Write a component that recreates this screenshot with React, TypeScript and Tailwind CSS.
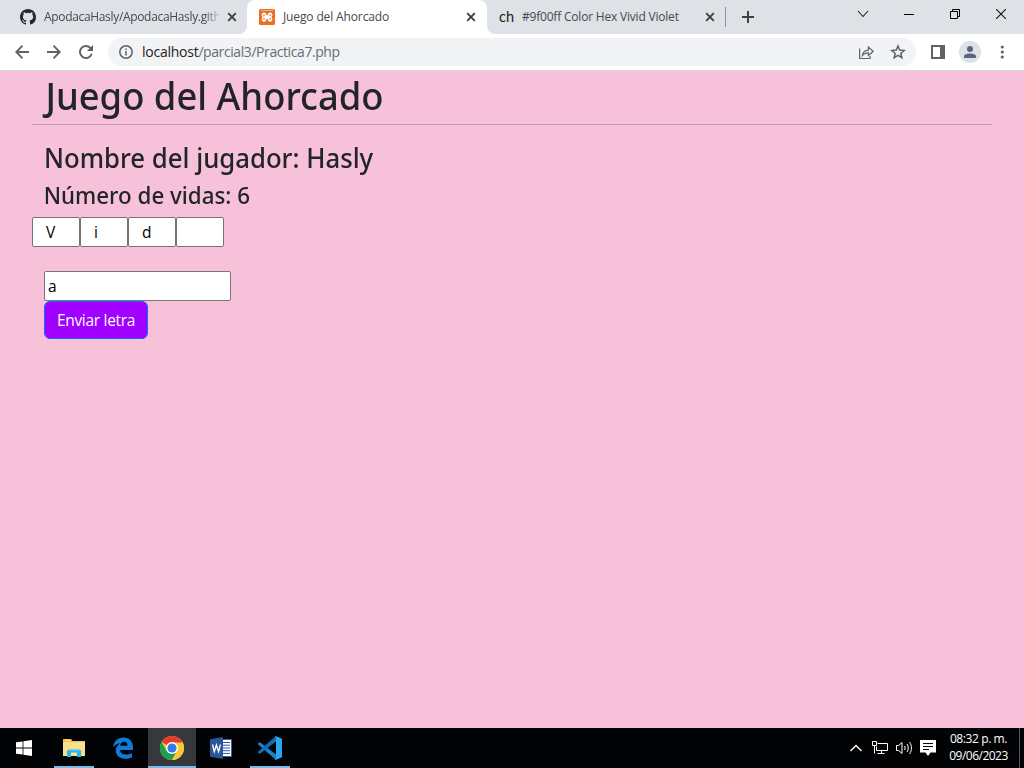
import React from 'react';

function CloseX() {
  return (
    <svg className="block h-[10px] w-[10px] shrink-0" viewBox="0 0 10 10" stroke="#3c4043" strokeWidth="1.9">
      <path d="M1.2 1.2l7.6 7.6M8.800 1.200l-7.600 7.600" />
    </svg>
  );
}

function TabStrip() {
  return (
    <div className="flex h-[34px] bg-white text-[12px] leading-[34px] text-[#45494d]">
      <div className="flex w-[247px] items-center rounded-br-[8px] bg-[#dee1e6] pl-[20px]">
        <svg className="block h-4 w-4 shrink-0" viewBox="0 0 16 16" fill="#24292f">
          <path d="M8 0C3.58 0 0 3.58 0 8c0 3.54 2.29 6.53 5.47 7.59.4.07.55-.17.55-.38 0-.19-.01-.82-.01-1.49-2.01.37-2.53-.49-2.69-.94-.09-.23-.48-.94-.82-1.13-.28-.15-.68-.52-.01-.53.63-.01 1.08.58 1.23.82.72 1.21 1.87.87 2.33.66.07-.52.28-.87.51-1.07-1.78-.2-3.64-.89-3.64-3.95 0-.87.31-1.59.82-2.15-.08-.2-.36-1.02.08-2.12 0 0 .67-.21 2.2.82a7.6 7.6 0 0 1 4 0c1.53-1.04 2.2-.82 2.2-.82.44 1.1.16 1.92.08 2.12.51.56.82 1.27.82 2.15 0 3.07-1.87 3.75-3.65 3.95.29.25.54.73.54 1.48 0 1.07-.01 1.93-.01 2.2 0 .21.15.46.55.38A8.01 8.01 0 0 0 16 8c0-4.42-3.58-8-8-8z" />
        </svg>
        <span className="ml-2 w-[175px] shrink-0 overflow-hidden whitespace-nowrap tracking-[-0.33px] [mask-image:linear-gradient(to_right,black_160px,transparent_178px)]">
          ApodacaHasly/ApodacaHasly.gith
        </span>
        <span className="ml-[8px]"><CloseX /></span>
      </div>
      <div className="w-[240px] bg-[#dee1e6]">
        <div className="flex h-full items-center rounded-t-[8px] bg-white pl-[12px]">
          <svg className="block h-4 w-4 shrink-0" viewBox="0 0 16 16">
            <rect width="16" height="16" rx="1.5" fill="#e8701f" />
            <path d="M2 1.500h12" stroke="#f5b288" strokeWidth="1" />
            <path
              d="M3.200 6.300V5.400c0-.9.500-1.400 1.400-1.400h.8c.9 0 1.500.6 1.500 1.500v1.300h2.200V5.500c0-.9.6-1.500 1.500-1.500h.8c.9 0 1.400.5 1.400 1.400v.9c0 .9-.5 1.700-1.300 1.700.8 0 1.300.8 1.300 1.700v1.100c0 .9-.5 1.400-1.400 1.400h-.8c-.9 0-1.500-.6-1.500-1.500V9.300H6.900v1.400c0 .9-.6 1.500-1.500 1.500h-.8c-.9 0-1.400-.5-1.400-1.400V9.700c0-.9.5-1.700 1.300-1.700-.8 0-1.300-.8-1.300-1.700z"
              fill="#fff" stroke="#fff" strokeWidth="1"
            />
            <path d="M5 5.500v1.700M5 9v1.700M11 5.500v1.700M11 9v1.700M8 3.500v2.300M8 10.300v2.300" stroke="#e8701f" strokeWidth="1.200" />
            <path d="M4.800 8h6.400" stroke="#fff" strokeWidth="1.600" />
          </svg>
          <span className="ml-2 w-[175px] whitespace-nowrap tracking-[-0.13px]">Juego del Ahorcado</span>
          <span className="ml-[8px]"><CloseX /></span>
        </div>
      </div>
      <div className="flex grow items-center rounded-bl-[8px] bg-[#dee1e6] pl-[12px]">
        <span className="w-[23px] font-['Lato',sans-serif] text-[14.5px] leading-[32px] tracking-[0.2px] text-[#202124]">ch</span>
        <span className="w-[175px] whitespace-nowrap tracking-[-0.2px]">#9f00ff Color Hex Vivid Violet</span>
        <span className="ml-[8px]"><CloseX /></span>
        <span className="ml-[10px] h-[20px] w-px bg-[#909398]" />
        <svg className="ml-[16px] block h-3 w-3" viewBox="0 0 12 12" stroke="#3c4043" strokeWidth="2">
          <path d="M6 0v12M0 6h12" />
        </svg>
      </div>
      <div className="flex w-[184px] items-start bg-[#dee1e6] text-black">
        <svg className="ml-[17px] mt-[10px] block h-[8px] w-[12px]" viewBox="0 0 12 8" fill="none" stroke="#222" strokeWidth="1.1">
          <path d="M1 1l5 5.500 5-5.500" />
        </svg>
        <span className="ml-[35px] mt-[14px] h-px w-[10px] bg-black" />
        <svg className="ml-[36px] mt-[9px] block h-[10px] w-[10px]" viewBox="0 0 10 10" fill="none" stroke="#000">
          <path d="M.5 2.500h7v7h-7zM2.500 2.500v-2h7v7h-2" />
        </svg>
        <svg className="ml-[36px] mt-[9px] block h-[10px] w-[10px]" viewBox="0 0 10 10" stroke="#111" strokeWidth="1.100">
          <path d="M0 0l10 10M10 0L0 10" />
        </svg>
      </div>
    </div>
  );
}

function Toolbar() {
  return (
    <div className="flex h-[37px] items-center border-b border-[#d5d8dc] bg-white pl-[15px]">
      <svg className="block h-[14px] w-[14px]" viewBox="0 0 14 14" fill="none" stroke="#5f6368" strokeWidth="1.900">
        <path d="M14 7H1.500M7.500.7L1.300 7l6.200 6.300" />
      </svg>
      <svg className="ml-[18px] block h-[14px] w-[14px]" viewBox="0 0 14 14" fill="none" stroke="#5f6368" strokeWidth="1.900">
        <path d="M0 7h12.500M6.500.7L12.700 7l-6.200 6.300" />
      </svg>
      <svg className="ml-[18px] block h-[14px] w-[14px]" viewBox="0 0 14 14" fill="none">
        <path d="M12.700 8.800A6 6 0 1 1 11.300 2.800L13 4.500" stroke="#5f6368" strokeWidth="1.900" />
        <path d="M14 0v6H8z" fill="#5f6368" />
      </svg>
      <div className="ml-[15px] flex h-[28px] w-[808px] items-center rounded-full bg-[#f1f3f4] pl-[11px]">
        <svg className="block h-[14px] w-[14px]" viewBox="0 0 14 14" fill="none" stroke="#5f6368" strokeWidth="1.500">
          <circle cx="7" cy="7" r="6.200" />
          <path d="M7 6v4.500M7 3.400v1.500" />
        </svg>
        <span className="ml-[9px] w-[716px] whitespace-nowrap text-[14px] leading-[28px] tracking-[-0.42px] text-[#686c71]">
          <span className="tracking-[-0.25px] text-[#202124]">localhost</span>/parcial3/Practica7.php
        </span>
        <svg className="block h-[15px] w-[16px]" viewBox="0 0 16 15" fill="none" stroke="#5f6368" strokeWidth="1.200">
          <path d="M1.600 3.500v10h10.500v-2.500" />
          <path d="M4.400 10.500c.4-3.600 2.400-5.200 6-5.400V2l4.800 4.300-4.800 4.200V7.800c-2.800 0-4.600.8-6 2.700z" />
        </svg>
        <svg className="ml-[16px] block h-[16px] w-[16px] shrink-0" viewBox="0 0 16 16" fill="none" stroke="#5f6368" strokeWidth="1.500">
          <path d="M8 2l1.700 4.100 4.500.4-3.400 2.900 1.100 4.300L8 11.400l-3.900 2.300 1.100-4.300-3.400-2.900 4.500-.4z" />
        </svg>
      </div>
      <svg className="ml-[15px] block h-[14px] w-[14px]" viewBox="0 0 14 14">
        <path fill="#5f6368" fillRule="evenodd" d="M0 0h14v14H0zM2 2v10h7V2z" />
      </svg>
      <div className="ml-[14px] flex h-[22px] w-[22px] items-center justify-center rounded-full bg-[#dee1e6]">
        <svg className="block h-[12px] w-[12px]" viewBox="0 0 12 12" fill="#5a647a">
          <circle cx="6" cy="3" r="3" />
          <path d="M0 12v-1.700C0 8.300 3.500 7.500 6 7.500s6 .8 6 2.800V12z" />
        </svg>
      </div>
      <svg className="ml-[19px] block h-[14px] w-[4px]" viewBox="0 0 4 14" fill="#5f6368">
        <circle cx="2.300" cy="2" r="1.600" />
        <circle cx="2.300" cy="7" r="1.600" />
        <circle cx="2.300" cy="12" r="1.600" />
      </svg>
    </div>
  );
}

const letters = ['V', 'i', 'd', ''];

function Game() {
  return (
    <main className="grow bg-[#f7c1d9] px-[32px] text-[#212529]">
      <h1 className="h-[53px] origin-left scale-x-[0.957] whitespace-nowrap pl-[14px] font-['Noto_Sans',sans-serif] text-[38px] font-medium leading-[48px]">
        Juego del Ahorcado
      </h1>
      <div className="h-px bg-[#c09aae]" />
      <h2 className="mt-[16px] h-[34px] origin-left scale-x-[0.957] whitespace-nowrap pl-[12.500px] font-['Noto_Sans',sans-serif] text-[26.900px] font-medium leading-[34px]">
        Nombre del jugador: Hasly
      </h2>
      <h3 className="mt-[7px] h-[35px] origin-left scale-x-[0.972] whitespace-nowrap pl-[12px] font-['Noto_Sans',sans-serif] text-[23px] font-medium leading-[27px]">
        Número de vidas: 6
      </h3>
      <div className="flex">
        {letters.map((l, i) => (
          <div key={i} className="h-[30px] w-[48px] rounded-[2px] border border-[#767676] bg-white pl-[13px] text-[15.5px] leading-[29px] text-black">
            {l}
          </div>
        ))}
      </div>
      <div className="flex flex-col items-start pl-[12px] pt-[24px]">
        <input
          readOnly
          value="a"
          className="h-[30px] w-[187px] rounded-[2px] border border-[#767676] bg-white px-[3px] text-[15.5px] text-black outline-none"
        />
        <button className="h-[38px] w-[104px] whitespace-nowrap rounded-[6px] border border-[#0d6efd] bg-[#9f00ff] text-[15.5px] leading-[36px] tracking-[-0.3px] text-white">
          Enviar letra
        </button>
      </div>
    </main>
  );
}

function Taskbar() {
  return (
    <footer className="flex h-[40px] bg-[#020305] text-white">
      <div className="flex w-[48px] items-center justify-center">
        <svg className="block h-4 w-4" viewBox="0 0 16 16" fill="#fff">
          <path d="M0 2.300l6.600-.9v6.200H0zM7.400 1.300L16 0v7.600H7.400zM0 8.400h6.600v6.200L0 13.700zM7.400 8.400H16V16l-8.600-1.300z" />
        </svg>
      </div>
      <div className="flex w-[52px] flex-col items-center">
        <svg className="mt-[10px] block h-[20px] w-[22px]" viewBox="0 0 22 20">
          <path d="M0 1h8l1.500 2H22v15H0z" fill="#eebf4b" />
          <path d="M0 4h22v14H0z" fill="#fbe08b" />
          <path d="M2 2.200h5" stroke="#fff3bf" />
          <path d="M4 19v-6.500L6 11h10l2 1.500V19h-4v-4.500H8V19z" fill="#27b6ee" />
          <path d="M5 11h12v1.500H5z" fill="#6dd4f7" />
        </svg>
        <span className="mt-auto h-[2px] w-[40px] bg-[#76b9ed]" />
      </div>
      <div className="flex w-[48px] items-center pl-[12px]">
        <svg className="block h-[22px] w-[22px]" viewBox="0 0 22 22">
          <path d="M1 10C2 4 6 .5 11.500.5 17.500.5 21 4.700 21 10.300V13H8c.2 3 2.600 4.600 6 4.600 2.300 0 4.200-.6 6-1.700v4.300c-2 1-4.300 1.500-7 1.500-5.700 0-9.200-3.300-9.200-8.100 0-3.300 1.700-5.900 4.700-7.400C5 6.700 3 8 1 10zm7.200-1.200h7.300c0-2.500-1.300-4-3.600-4-2 0-3.300 1.500-3.700 4z" fill="#0f7bd8" fillRule="evenodd" />
        </svg>
      </div>
      <div className="flex w-[48px] flex-col items-center bg-[#37383c]">
        <svg className="mt-[8px] block h-6 w-6" viewBox="0 0 24 24">
          <circle cx="12" cy="12" r="12" fill="#fcc934" />
          <path d="M12 12L1.600 6a12 12 0 0 1 20.800 0z" fill="#e33b2e" />
          <path d="M1.600 6a12 12 0 0 0 10.400 18l5.200-9L12 12l-5.200 3z" fill="#1e9e50" />
          <path d="M12 6.500h10.700A12 12 0 0 1 12 24l5-9z" fill="#fcc934" />
          <circle cx="12" cy="12" r="6" fill="#fff" />
          <circle cx="12" cy="12" r="4.600" fill="#3b78e7" />
        </svg>
        <span className="mt-auto h-[2px] w-full bg-[#76b9ed]" />
      </div>
      <div className="flex w-[50px] items-center justify-center">
        <svg className="block h-[22px] w-[22px]" viewBox="0 0 22 22">
          <path d="M11 2.500h10.500v17H11z" fill="#fff" stroke="#2b579a" strokeWidth=".8" />
          <path d="M13 5.500h7M13 8.200h7M13 11h7M13 13.700h7M13 16.400h7" stroke="#2b579a" strokeWidth="1" />
          <path d="M0 2.300L13 0v22L0 19.700z" fill="#2b579a" />
          <path d="M2.500 7.500l1.800 7.200L6.400 8l2.200 6.700 1.800-7.200" fill="none" stroke="#fff" strokeWidth="1.300" />
        </svg>
      </div>
      <div className="flex w-[48px] flex-col items-center">
        <svg className="mt-[8px] block h-6 w-6" viewBox="0 0 24 24">
          <path d="M0 7.500l1.700-1.500L18 18.500V24L.2 8.600z" fill="#1684cc" />
          <path d="M0 16.500L1.700 18 18 5.500V0L.2 15.400z" fill="#0e6fb4" />
          <path d="M17.500 0L24 2.800v18.400L17.500 24l-1-1c.8.4 1.500 0 1.500-1V2c0-1-.7-1.400-1.500-1z" fill="#2ca6ef" />
        </svg>
        <span className="mt-auto h-[2px] w-[40px] bg-[#76b9ed]" />
      </div>
      <div className="ml-auto flex items-center">
        <svg className="block h-[8px] w-[12px]" viewBox="0 0 12 8" fill="none" stroke="#fff" strokeWidth="1.300">
          <path d="M.5 7L6 1.500 11.500 7" />
        </svg>
        <svg className="ml-[10px] block h-[14px] w-[16px]" viewBox="0 0 16 14" fill="none" stroke="#fff">
          <path d="M5.500 2.500h10v7h-11v-4M.5.500h4v4h-4zM2.500 4.500v8M9.500 9.500v3M5.500 12.500h7" />
        </svg>
        <svg className="ml-[8px] block h-[14px] w-[17px]" viewBox="0 0 17 14" fill="none" stroke="#fff">
          <path d="M.5 4.500h2.200L6 1.500v11L2.700 9.500H.5z" />
          <path d="M8.500 5c.8 1.200.8 2.800 0 4M11 3c1.700 2.400 1.700 5.600 0 8M13.500 1c2.600 3.600 2.600 8.400 0 12" />
        </svg>
        <svg className="ml-[7px] block h-[16px] w-[16px]" viewBox="0 0 16 16">
          <path d="M0 0h16v12.500h-5.500L8 16l-2.500-3.500H0z" fill="#fff" />
          <path d="M3 3.500h10M3 6.500h10M3 9.500h6" stroke="#000" />
        </svg>
        <div className="ml-[13px] flex h-[37px] w-[60px] flex-col items-center self-start whitespace-nowrap pr-px pt-[2px] text-[12px] leading-[17px]">
          <span className="tracking-[-0.400px]">08:32 p. m.</span>
          <span className="tracking-[-0.520px]">09/06/2023</span>
        </div>
        <span className="ml-[10px] mr-[4px] h-[40px] w-px bg-[#55585c]" />
      </div>
    </footer>
  );
}

export default function App() {
  return (
    <div className="flex h-[768px] w-[1024px] flex-col overflow-hidden font-['Open_Sans',sans-serif]">
      <TabStrip />
      <Toolbar />
      <Game />
      <Taskbar />
    </div>
  );
}
